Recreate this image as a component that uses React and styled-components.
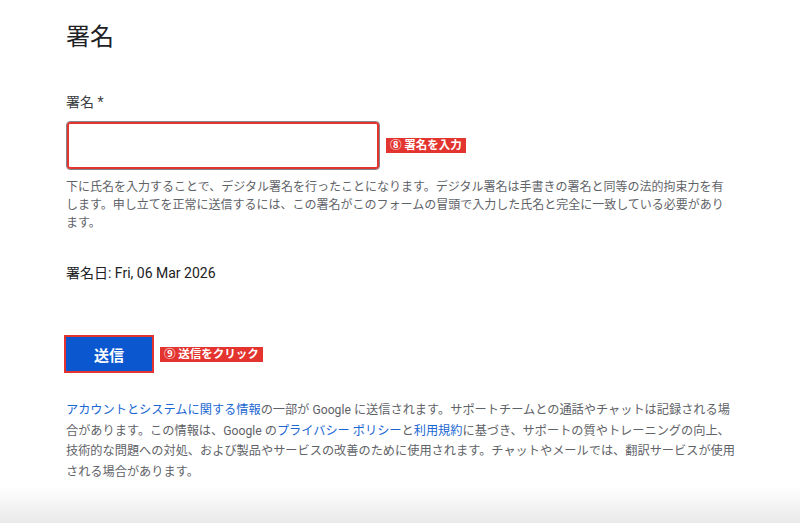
import React from 'react';
import styled, { createGlobalStyle } from 'styled-components';

const GlobalStyle = createGlobalStyle`
  body {
    margin: 0;
    background: #ffffff;
    font-family: Roboto, "Noto Sans CJK JP", sans-serif;
  }
`;

const Page = styled.main`
  padding: 21px 0 60px 66px;
  color: #202124;
`;

const Title = styled.h1`
  margin: 0;
  font-size: 24px;
  line-height: 32px;
  font-weight: 400;
`;

const Label = styled.div`
  margin-top: 39px;
  font-size: 14px;
  line-height: 20px;
  color: #3c4043;
`;

const FieldRow = styled.div`
  margin-top: 9px;
  display: flex;
  align-items: center;
  gap: 6px;
`;

const TextInput = styled.input`
  box-sizing: border-box;
  width: 314px;
  height: 49px;
  margin: 0;
  padding: 0 12px;
  border: 1px solid #80868b;
  border-radius: 4px;
  outline: 2px solid #e3342f;
  outline-offset: -3px;
  font-size: 14px;
  background: #fff;
`;

const Badge = styled.span`
  display: inline-flex;
  align-items: center;
  gap: 3px;
  height: 15px;
  padding: 0 4px;
  background: #e3342f;
  color: #ffffff;
  font-size: 11.5px;
  font-weight: 700;
  line-height: 15px;
  white-space: nowrap;
`;

const Helper = styled.p`
  margin: 8px 0 0;
  width: 666px;
  font-size: 12px;
  line-height: 18px;
  color: #5f6368;
`;

const SignedDate = styled.div`
  margin-top: 31px;
  font-size: 14px;
  line-height: 20px;
  color: #202124;
`;

const ActionRow = styled.div`
  margin-top: 52px;
  margin-left: -2px;
  display: flex;
  align-items: center;
  gap: 6px;
`;

const SubmitButton = styled.button`
  box-sizing: border-box;
  width: 90px;
  height: 38px;
  border: 2px solid #e3342f;
  background: #0b57d0;
  color: #ffffff;
  font-family: Roboto, "Noto Sans CJK JP", sans-serif;
  font-size: 15px;
  font-weight: 700;
  cursor: pointer;
`;

const Notice = styled.p`
  margin: 27px 0 0;
  width: 672px;
  font-size: 12.2px;
  line-height: 20.5px;
  color: #5f6368;
`;

const Link = styled.a`
  color: #1a67d2;
  text-decoration: none;
`;

const BottomFade = styled.div`
  position: fixed;
  left: 0;
  right: 0;
  bottom: 0;
  height: 36px;
  background: linear-gradient(to bottom, rgba(232, 232, 232, 0), #e9e9e9);
  pointer-events: none;
`;

export default function App() {
  return (
    <>
      <GlobalStyle />
      <Page>
        <Title>署名</Title>
        <Label>署名 *</Label>
        <FieldRow>
          <TextInput type="text" aria-label="署名" />
          <Badge>⑧ 署名を入力</Badge>
        </FieldRow>
        <Helper>
          下に氏名を入力することで、デジタル署名を行ったことになります。デジタル署名は手書きの署名と同等の法的拘束力を有します。申し立てを正常に送信するには、この署名がこのフォームの冒頭で入力した氏名と完全に一致している必要があります。
        </Helper>
        <SignedDate>署名日: Fri, 06 Mar 2026</SignedDate>
        <ActionRow>
          <SubmitButton type="button">送信</SubmitButton>
          <Badge>⑨ 送信をクリック</Badge>
        </ActionRow>
        <Notice>
          <Link href="#">アカウントとシステムに関する情報</Link>の一部が Google に送信されます。サポートチームとの通話やチャットは記録される場合があります。この情報は、Google の<Link href="#">プライバシー ポリシー</Link>と<Link href="#">利用規約</Link>に基づき、サポートの質やトレーニングの向上、技術的な問題への対処、および製品やサービスの改善のために使用されます。チャットやメールでは、翻訳サービスが使用される場合があります。
        </Notice>
      </Page>
      <BottomFade />
    </>
  );
}
